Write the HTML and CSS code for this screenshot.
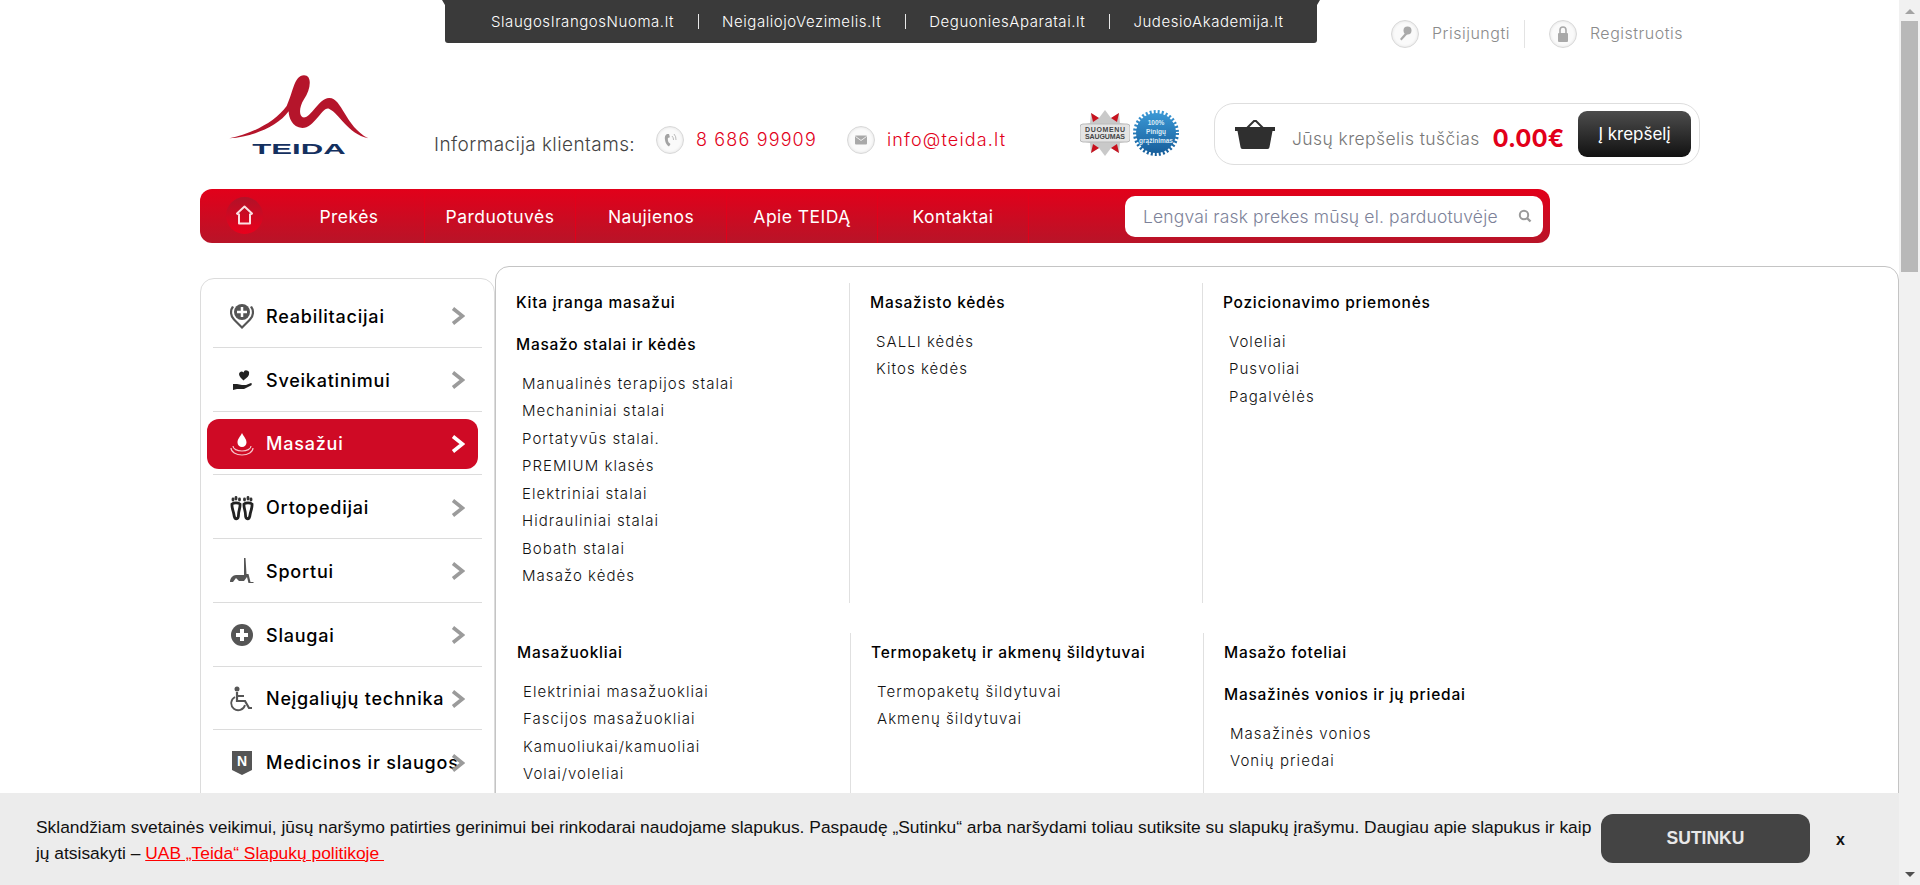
FILE: index.html
```html
<!DOCTYPE html>
<html lang="lt">
<head>
<meta charset="utf-8">
<title>TEIDA</title>
<link rel="stylesheet" href="styles.css">
</head>
<body>
<div class="page">
  <div class="utility">
    <nav class="sites">
      <a class="site">SlaugosIrangosNuoma.lt</a>
      <a class="site">NeigaliojoVezimelis.lt</a>
      <a class="site">DeguoniesAparatai.lt</a>
      <a class="site">JudesioAkademija.lt</a>
    </nav>
    <div class="account">
      <a class="acc-link">
        <span class="round-icon"><svg viewBox="0 0 28 28" width="28" height="28"><circle cx="16.500" cy="10.500" r="4" fill="#a9a9a9"/><path d="M15 12 9 19l1.500 1.500L16.500 14z" fill="#a9a9a9"/></svg></span>
        <span class="acc-text">Prisijungti</span>
      </a>
      <a class="acc-link acc-second">
        <span class="round-icon"><svg viewBox="0 0 28 28" width="28" height="28"><rect x="9" y="13" width="10" height="9" rx="1" fill="#a9a9a9"/><path d="M11 13v-3a3 3 0 0 1 6 0v3" fill="none" stroke="#a9a9a9" stroke-width="1.600"/></svg></span>
        <span class="acc-text">Registruotis</span>
      </a>
    </div>
  </div>

  <header class="brand">
    <a class="logo">
      <svg viewBox="85 45 420 255" width="140" height="85">
        <path fill="#b5152b" d="M86 235C150 222 222 188 258 138C280 90 280 48 310 46C336 46 330 88 310 118C296 140 294 165 306 172C330 178 352 116 385 114C424 112 432 198 503 235C440 220 418 162 385 146C365 138 342 204 305 204C274 202 264 172 264 154C232 198 160 230 86 235Z"/>
        <text x="155" y="281" class="logo-text" textLength="280" lengthAdjust="spacingAndGlyphs">TEIDA</text>
      </svg>
    </a>
    <div class="info">
      <span class="info-label">Informacija klientams:</span>
      <span class="round-icon"><svg viewBox="0 0 28 28" width="28" height="28"><path d="M11 8c-2 1-2.500 3-2 6s2 5.500 4 6.500l1.500-2.500-1.800-1.500c-.8-1.500-1-3-.8-4.500l2-.8L13 8z" fill="#a3a3a3"/><path d="M16 10a5 5 0 0 1 1.500 4M18 8a8 8 0 0 1 2 6" fill="none" stroke="#bbb" stroke-width="1"/></svg></span>
      <a class="contact contact-phone">8 686 99909</a>
      <span class="round-icon"><svg viewBox="0 0 28 28" width="28" height="28"><rect x="8" y="9.500" width="12" height="9" rx="1" fill="#a9a9a9"/><path d="m8.500 10.500 5.500 4 5.500-4" fill="none" stroke="#eee" stroke-width="1"/></svg></span>
      <a class="contact contact-mail">info@teida.lt</a>
    </div>
    <div class="badges">
      <svg viewBox="0 0 50 46" width="50" height="46">
        <path d="M25 0 31 8 39 3 40 13 50 15V31L40 33 39 43 31 38 25 46 19 38 11 43 10 33 0 31V15L10 13 11 3 19 8Z" fill="#c9c9c9"/>
        <path d="m11 3 8 5-6 4zM39 3l-8 5 6 4zM11 43l8-5-6-4zM39 43l-8-5 6-4z" fill="#c8121f"/>
        <rect x="0" y="14" width="50" height="18" rx="3" fill="#e4e4e4" stroke="#bbb"/>
        <text x="25" y="22" class="badge-dark" textLength="40">DUOMENU</text>
        <text x="25" y="29" class="badge-dark" textLength="40">SAUGUMAS</text>
      </svg>
      <svg viewBox="0 0 46 46" width="46" height="46">
        <defs><linearGradient id="blue" x1="0" y1="0" x2="0" y2="1"><stop offset="0" stop-color="#3a97d4"/><stop offset="1" stop-color="#175f9c"/></linearGradient></defs>
        <circle cx="23" cy="23" r="20" fill="url(#blue)"/>
        <circle cx="23" cy="23" r="21" fill="none" stroke="url(#blue)" stroke-width="4" stroke-dasharray="2 2"/>
        <text x="23" y="15" class="badge-light">100%</text>
        <text x="23" y="24" class="badge-light">Pinigų</text>
        <text x="23" y="33" class="badge-light">grąžinimas</text>
      </svg>
    </div>
    <div class="cart">
      <svg class="basket" viewBox="0 0 40 30" width="40" height="30">
        <path d="M12 9 19 2h2l7 7" fill="none" stroke="#333" stroke-width="2"/>
        <path d="M0 8h40v4h-2.500l-3 16a2 2 0 0 1-2 2h-25a2 2 0 0 1-2-2l-3-16H0z" fill="#2f2f2f"/>
      </svg>
      <span class="cart-text">Jūsų krepšelis tuščias</span>
      <span class="cart-sum">0.00€</span>
      <a class="cart-btn">Į krepšelį</a>
    </div>
  </header>

  <nav class="mainnav">
    <a class="home"><svg viewBox="0 0 37 37" width="37" height="37"><path d="M18.500 9.500 26 16.500l-2 1v9H13v-9l-2-1z" fill="none" stroke="#fbdfe2" stroke-width="2" stroke-linejoin="round"/></svg></a>
    <a class="nav-item">Prekės</a>
    <a class="nav-item">Parduotuvės</a>
    <a class="nav-item">Naujienos</a>
    <a class="nav-item">Apie TEIDĄ</a>
    <a class="nav-item">Kontaktai</a>
    <div class="search">
      <span class="search-text">Lengvai rask prekes mūsų el. parduotuvėje</span>
      <svg viewBox="0 0 14 14" width="14" height="14"><circle cx="6" cy="6" r="4.200" fill="none" stroke="#9a9a9a" stroke-width="2"/><path d="m9 9 3.500 3.500" stroke="#9a9a9a" stroke-width="2.400"/></svg>
    </div>
  </nav>

  <main class="main">
    <aside class="side">
      <div class="side-row"><a class="side-link">
        <svg class="side-icon" viewBox="0 0 24 26"><path d="M12 26 3 17a11 11 0 0 1-1-14l2 1a9 9 0 0 0 1 12l7 7 7-7a9 9 0 0 0 1-12l2-1a11 11 0 0 1-1 14z" fill="#555"/><circle cx="12" cy="9" r="8" fill="#555"/><path d="M12 4v10M7 9h10" stroke="#fff" stroke-width="2.500"/></svg>
        <span class="side-text">Reabilitacijai</span>
        <svg class="chev" viewBox="0 0 14 18"><path d="m2 1.500 9.500 7.500L2 16.500" fill="none" stroke="#9b9b9b" stroke-width="3.600"/></svg>
      </a></div>
      <div class="side-row"><a class="side-link">
        <svg class="side-icon" viewBox="0 0 24 26"><path d="M9 7a2.500 2.500 0 0 1 4.500-1.500A2.500 2.500 0 0 1 19 7c0 2.500-3.500 4.500-5.500 6.500C11.500 11.500 9 9.500 9 7z" fill="#222"/><path d="M3 17h4l5 1h4l5-2c1 0 1 2 0 2.500L14 22H7l-4 1z" fill="#222"/></svg>
        <span class="side-text">Sveikatinimui</span>
        <svg class="chev" viewBox="0 0 14 18"><path d="m2 1.500 9.500 7.500L2 16.500" fill="none" stroke="#9b9b9b" stroke-width="3.600"/></svg>
      </a></div>
      <div class="side-row"><a class="side-link side-active">
        <svg class="side-icon" viewBox="0 0 24 26"><path d="M12 2c2 4 4.500 6 4.500 9.500a4.500 4.500 0 0 1-9 0C7.500 8 10 6 12 2z" fill="#fff"/><path d="M3 15c0 3 4 5 9 5s9-2 9-5M1 17c0 4 5 7 11 7s11-3 11-7" fill="none" stroke="#f6c6cc" stroke-width="1.200"/></svg>
        <span class="side-text">Masažui</span>
        <svg class="chev" viewBox="0 0 14 18"><path d="m2 1.500 9.500 7.500L2 16.500" fill="none" stroke="#fff" stroke-width="3.600"/></svg>
      </a></div>
      <div class="side-row"><a class="side-link">
        <svg class="side-icon" viewBox="0 0 24 26"><path d="M2 9c2-1.500 6-1.500 8 0 .5 4-1.500 6-1.500 11 0 5-4 5-4.500 0C3.500 16 1.500 13 2 9zM22 9c-2-1.500-6-1.500-8 0-.5 4 1.500 6 1.500 11 0 5 4 5 4.500 0 .5-4 2.500-7 2-11z" fill="none" stroke="#222" stroke-width="2.800"/><path d="M3 4v1M6 2.500v1.500M9.500 4v1M14.500 4v1M18 2.500v1.500M21 4v1" stroke="#333" stroke-width="2.800" stroke-linecap="round"/></svg>
        <span class="side-text">Ortopedijai</span>
        <svg class="chev" viewBox="0 0 14 18"><path d="m2 1.500 9.500 7.500L2 16.500" fill="none" stroke="#9b9b9b" stroke-width="3.600"/></svg>
      </a></div>
      <div class="side-row"><a class="side-link">
        <svg class="side-icon" viewBox="0 0 24 26"><path d="M14 0h1.500l1 16h2l2 8h3v1h-5l-1.500-6-3 4H9l-3-3-3 4H0c0-4 3-7 6-7h8z" fill="#555"/></svg>
        <span class="side-text">Sportui</span>
        <svg class="chev" viewBox="0 0 14 18"><path d="m2 1.500 9.500 7.500L2 16.500" fill="none" stroke="#9b9b9b" stroke-width="3.600"/></svg>
      </a></div>
      <div class="side-row"><a class="side-link">
        <svg class="side-icon" viewBox="0 0 24 26"><circle cx="12" cy="13" r="11" fill="#555"/><path d="M12 7v12M6 13h12" stroke="#fff" stroke-width="4"/></svg>
        <span class="side-text">Slaugai</span>
        <svg class="chev" viewBox="0 0 14 18"><path d="m2 1.500 9.500 7.500L2 16.500" fill="none" stroke="#9b9b9b" stroke-width="3.600"/></svg>
      </a></div>
      <div class="side-row"><a class="side-link">
        <svg class="side-icon" viewBox="0 0 24 26"><circle cx="7" cy="3" r="2.500" fill="#555"/><path d="M7 6v9h8l4 7h3M7 10h7" fill="none" stroke="#555" stroke-width="2.200"/><path d="M5 11a7 7 0 1 0 10 8" fill="none" stroke="#555" stroke-width="1.800"/></svg>
        <span class="side-text">Neįgaliųjų technika</span>
        <svg class="chev" viewBox="0 0 14 18"><path d="m2 1.500 9.500 7.500L2 16.500" fill="none" stroke="#9b9b9b" stroke-width="3.600"/></svg>
      </a></div>
      <div class="side-row"><a class="side-link">
        <svg class="side-icon" viewBox="0 0 24 26"><path d="M2 1h20v19l-10 5-10-5z" fill="#555"/><text x="12" y="16" class="shield-n">N</text></svg>
        <span class="side-text">Medicinos ir slaugos</span>
        <svg class="chev" viewBox="0 0 14 18"><path d="m2 1.500 9.500 7.500L2 16.500" fill="none" stroke="#9b9b9b" stroke-width="3.600"/></svg>
      </a></div>
    </aside>

    <section class="panel">
      <div class="cols">
        <div class="col">
          <h3 class="col-head">Kita įranga masažui</h3>
          <h3 class="col-head">Masažo stalai ir kėdės</h3>
          <ul class="col-list">
            <li>Manualinės terapijos stalai</li>
            <li>Mechaniniai stalai</li>
            <li>Portatyvūs stalai.</li>
            <li>PREMIUM klasės</li>
            <li>Elektriniai stalai</li>
            <li>Hidrauliniai stalai</li>
            <li>Bobath stalai</li>
            <li>Masažo kėdės</li>
          </ul>
        </div>
        <div class="col">
          <h3 class="col-head">Masažisto kėdės</h3>
          <ul class="col-list">
            <li>SALLI kėdės</li>
            <li>Kitos kėdės</li>
          </ul>
        </div>
        <div class="col">
          <h3 class="col-head">Pozicionavimo priemonės</h3>
          <ul class="col-list">
            <li>Voleliai</li>
            <li>Pusvoliai</li>
            <li>Pagalvėlės</li>
          </ul>
        </div>
      </div>
      <div class="cols cols-second">
        <div class="col">
          <h3 class="col-head">Masažuokliai</h3>
          <ul class="col-list">
            <li>Elektriniai masažuokliai</li>
            <li>Fascijos masažuokliai</li>
            <li>Kamuoliukai/kamuoliai</li>
            <li>Volai/voleliai</li>
          </ul>
        </div>
        <div class="col">
          <h3 class="col-head">Termopaketų ir akmenų šildytuvai</h3>
          <ul class="col-list">
            <li>Termopaketų šildytuvai</li>
            <li>Akmenų šildytuvai</li>
          </ul>
        </div>
        <div class="col">
          <h3 class="col-head">Masažo foteliai</h3>
          <h3 class="col-head">Masažinės vonios ir jų priedai</h3>
          <ul class="col-list">
            <li>Masažinės vonios</li>
            <li>Vonių priedai</li>
          </ul>
        </div>
      </div>
    </section>
  </main>
</div>

<div class="cookie">
  <p class="cookie-text">Sklandžiam svetainės veikimui, jūsų naršymo patirties gerinimui bei rinkodarai naudojame slapukus. Paspaudę „Sutinku“ arba naršydami toliau sutiksite su slapukų įrašymu. Daugiau apie slapukus ir kaip jų atsisakyti – <a class="cookie-link">UAB „Teida“ Slapukų politikoje&nbsp;</a></p>
  <a class="cookie-btn">SUTINKU</a>
  <a class="cookie-x">x</a>
</div>

<div class="scrollbar">
  <span class="sb-up"></span>
  <span class="sb-thumb"></span>
  <span class="sb-down"></span>
</div>
</body>
</html>
```
FILE: styles.css
```css
* { box-sizing: border-box; }
html, body { margin: 0; height: 885px; overflow: hidden; background: #fff; }
body { font-family: Inter, "Noto Sans", sans-serif; color: #111; }
a { color: inherit; text-decoration: none; }

.page { width: 1899px; }

/* top strip */
.utility { display: flex; height: 75px; padding-left: 445px; }
.sites {
  position: relative; display: flex; align-items: center; width: 872px; height: 43px; padding-left: 46px;
  background: #3a3a3a; border-radius: 0 0 3px 3px; color: #fff;
  font-size: 15px; font-weight: 300; letter-spacing: .56px;
}
.sites::before, .sites::after {
  content: ""; position: absolute; top: 0; width: 0; height: 0;
  border-top: 5px solid #3a3a3a;
}
.sites::before { left: -3px; border-left: 3px solid transparent; }
.sites::after { right: -3px; border-right: 3px solid transparent; }
.site { position: relative; padding-right: 48px; white-space: nowrap; }
.site + .site::before {
  content: ""; position: absolute; left: -24px; top: 2px; bottom: 2px; width: 1px; background: #e8e8e8;
}
.account { display: flex; margin: 20px 0 0 74px; color: #8b8b8b; font-size: 16px; font-weight: 300; letter-spacing: .5px; }
.acc-link { display: flex; align-items: center; gap: 13px; height: 28px; }
.acc-text { margin-bottom: 2px; }
.acc-second { margin-left: 14px; padding-left: 24px; border-left: 1px solid #e3e3e3; }

.round-icon {
  flex: none; display: block; width: 28px; height: 28px; border-radius: 50%;
  border: 1px solid #d8d8d8; background: #fafafa; box-shadow: inset 0 0 3px #ddd;
}
.round-icon svg { display: block; margin: -1px; }

/* brand row */
.brand { display: flex; height: 114px; padding-left: 229px; }
.logo { flex: none; display: block; width: 140px; height: 85px; }
.logo svg { display: block; }
.logo-text { font-family: "Liberation Sans", sans-serif; font-weight: 700; font-size: 44px; fill: #14305f; }
.info { flex: none; display: flex; align-items: center; height: 28px; margin: 51px 0 0 65px; font-size: 18px; font-weight: 300; }
.info-label { width: 202px; margin: 8px 20px 0 0; color: #444; font-size: 19px; letter-spacing: .42px; white-space: nowrap; }
.contact { margin: 0 0 2px 12px; color: #e2001a; letter-spacing: 1.150px; white-space: nowrap; }
.contact-phone { width: 151px; }
.contact-mail { width: 118px; }
.badges { flex: none; display: flex; gap: 3px; margin: 35px 0 0 75px; }
.badge-dark { font-family: "Liberation Sans", sans-serif; font-size: 7px; font-weight: 700; fill: #444; text-anchor: middle; }
.badge-light { font-family: "Liberation Sans", sans-serif; font-size: 6.500px; font-weight: 700; fill: #dcecf7; text-anchor: middle; }
.cart {
  flex: none; display: flex; align-items: center; width: 486px; height: 62px; margin: 28px 0 0 35px;
  padding: 0 8px 0 20px; border: 1px solid #dedede; border-radius: 20px;
}
.basket { flex: none; }
.cart-text { margin: 8px 0 0 17px; color: #777; font-size: 17.500px; font-weight: 300; letter-spacing: .4px; white-space: nowrap; }
.cart-sum { margin: 8px 0 0 13px; color: #e2001a; font-size: 24px; font-weight: 700; }
.cart-btn {
  display: flex; align-items: center; justify-content: center; width: 113px; height: 46px;
  margin-left: auto; border-radius: 9px; color: #fff; font-size: 17px;
  background: linear-gradient(#4d4d4d, #111);
}

/* main nav */
.mainnav {
  display: flex; align-items: center; width: 1350px; height: 54px; margin-left: 200px;
  border-radius: 12px; color: #fff; font-size: 17.500px; letter-spacing: .45px;
  background: linear-gradient(#e2001a, #b81428);
}
.home { flex: none; width: 74px; height: 54px; padding: 8px 0 0 26px; }
.home svg { display: block; border-radius: 50%; background: linear-gradient(#b01228, #ea001c); }
.nav-item {
  flex: none; display: flex; align-items: center; justify-content: center; width: 151px; height: 54px;
  border-right: 1px solid #e2001a; white-space: nowrap;
}
.search {
  display: flex; align-items: center; justify-content: space-between; width: 418px; height: 41px;
  margin-left: 96px; padding: 0 11px 0 18px; border-radius: 10px; background: #fff;
  color: #7d8299; font-size: 17.500px; letter-spacing: .15px; font-weight: 300; white-space: nowrap;
}

/* content */
.main { display: grid; grid-template-columns: 295px 1404px; height: 760px; margin: 23px 0 0 200px; }
.side {
  margin-top: 12px; padding-top: 5px; background: #fff;
  border: 1px solid #dcdcdc; border-radius: 14px 14px 0 0;
}
.side-row { display: flex; align-items: center; height: 63.750px; margin: 0 12px; border-bottom: 1px solid #dcdcdc; }
.side-link {
  display: flex; align-items: center; width: 271px; height: 50px; margin: 2px 3px 0 -6px;
  padding: 0 13px 0 23px; border-radius: 12px; color: #000;
}
.side-active { background: #cf0a25; color: #fff; }
.side-icon { flex: none; width: 24px; height: 26px; }
.side-text { flex: 1; min-width: 0; margin-left: 12px; font-size: 18px; font-weight: 500; letter-spacing: .78px; white-space: nowrap; }
.chev { flex: none; width: 14px; height: 18px; }
.shield-n { font-family: "Liberation Sans", sans-serif; font-size: 14px; font-weight: 700; fill: #fff; text-anchor: middle; }

.panel { padding: 16px 0 0; border: 1px solid #c4c4c4; border-radius: 14px 14px 0 0; }
.cols { display: grid; grid-template-columns: 353px 353px 353px; height: 320px; }
.cols-second { margin: 30px 0 0 1px; }
.col { padding-left: 20px; }
.col + .col { border-left: 1px solid #e0e0e0; }
.col-head { margin: 0 0 4.500px; font-size: 15.500px; font-weight: 500; letter-spacing: .75px; line-height: 40px; color: #000; white-space: nowrap; }
.col-head + .col-head { margin-top: -2.500px; }
.col-list { margin: 0; padding: 0 0 0 6px; list-style: none; font-size: 15px; font-weight: 300; letter-spacing: 1.050px; line-height: 27.500px; color: #111; }

/* cookie notice */
.cookie {
  position: fixed; left: 0; bottom: 0; width: 1899px; height: 92px;
  display: flex; align-items: flex-start; background: #ececec;
  font-family: "Liberation Sans", Arial, sans-serif;
}
.cookie-text { flex: none; width: 1570px; margin: 21px -5px 0 36px; font-size: 17.400px; line-height: 26px; color: #111; }
.cookie-link { color: #f00; text-decoration: underline; }
.cookie-btn {
  flex: none; display: flex; align-items: center; justify-content: center; width: 209px; height: 49px;
  margin-top: 21px; border-radius: 12px; background: #444; color: #e8e8e8; font-size: 17.500px; font-weight: 700;
}
.cookie-x { margin: 38px 0 0 26px; font-size: 16px; font-weight: 700; color: #111; }

/* window scrollbar */
.scrollbar {
  position: fixed; right: 0; top: 0; bottom: 0; width: 21px; background: #f1f1f1;
  display: flex; flex-direction: column; align-items: center;
}
.sb-up, .sb-down { position: relative; flex: none; width: 21px; height: 17px; }
.sb-up::after, .sb-down::after {
  content: ""; position: absolute; left: 5.500px; width: 0; height: 0;
  border-left: 5px solid transparent; border-right: 5px solid transparent;
}
.sb-up::after { top: 9px; border-bottom: 5px solid #a3a3a3; }
.sb-down::after { top: 4px; border-top: 5px solid #505050; }
.sb-thumb { flex: none; width: 17px; height: 251px; margin: 4px 0 596px; background: #b8b8b8; }
```
